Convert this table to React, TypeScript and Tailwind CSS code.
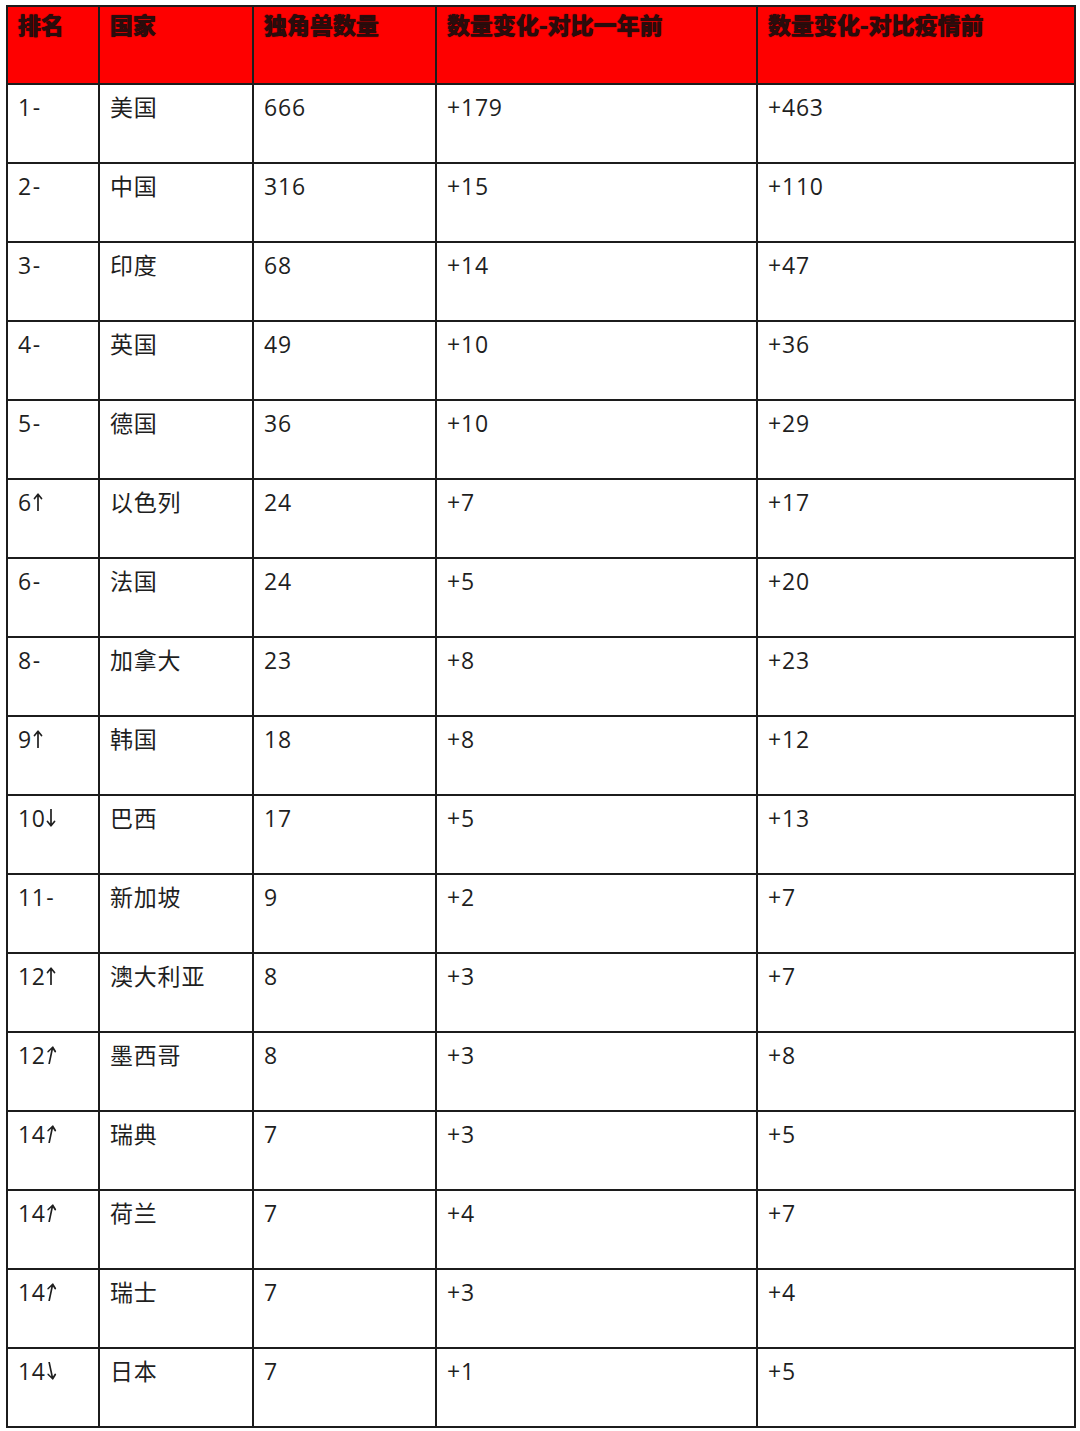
const headers = ["排名", "国家", "独角兽数量", "数量变化-对比一年前", "数量变化-对比疫情前"];

type Row = { rank: string; mark: "-" | "up" | "down"; slant?: boolean; country: string; count: string; year: string; covid: string };

const rows: Row[] = [
  { rank: "1", mark: "-", country: "美国", count: "666", year: "+179", covid: "+463" },
  { rank: "2", mark: "-", country: "中国", count: "316", year: "+15", covid: "+110" },
  { rank: "3", mark: "-", country: "印度", count: "68", year: "+14", covid: "+47" },
  { rank: "4", mark: "-", country: "英国", count: "49", year: "+10", covid: "+36" },
  { rank: "5", mark: "-", country: "德国", count: "36", year: "+10", covid: "+29" },
  { rank: "6", mark: "up", country: "以色列", count: "24", year: "+7", covid: "+17" },
  { rank: "6", mark: "-", country: "法国", count: "24", year: "+5", covid: "+20" },
  { rank: "8", mark: "-", country: "加拿大", count: "23", year: "+8", covid: "+23" },
  { rank: "9", mark: "up", country: "韩国", count: "18", year: "+8", covid: "+12" },
  { rank: "10", mark: "down", country: "巴西", count: "17", year: "+5", covid: "+13" },
  { rank: "11", mark: "-", country: "新加坡", count: "9", year: "+2", covid: "+7" },
  { rank: "12", mark: "up", country: "澳大利亚", count: "8", year: "+3", covid: "+7" },
  { rank: "12", mark: "up", slant: true, country: "墨西哥", count: "8", year: "+3", covid: "+8" },
  { rank: "14", mark: "up", slant: true, country: "瑞典", count: "7", year: "+3", covid: "+5" },
  { rank: "14", mark: "up", slant: true, country: "荷兰", count: "7", year: "+4", covid: "+7" },
  { rank: "14", mark: "up", slant: true, country: "瑞士", count: "7", year: "+3", covid: "+4" },
  { rank: "14", mark: "down", slant: true, country: "日本", count: "7", year: "+1", covid: "+5" },
];

const widths = ["w-[92px]", "w-[154px]", "w-[183px]", "w-[321px]", "w-[318px]"];

function Arrow({ down, slant }: { down?: boolean; slant?: boolean }) {
  return (
    <svg
      width="10"
      height="18"
      viewBox="0 0 10 18"
      className={`inline-block align-baseline ml-[1px] ${down ? "rotate-180" : ""} ${slant ? (down ? "skew-x-[12deg]" : "skew-x-[-12deg]") : ""}`}
      fill="none"
      stroke="#1f1f1f"
      strokeWidth="1.7"
      strokeLinecap="round"
      strokeLinejoin="round"
    >
      <path d="M5 17.5V1.5M1.5 5.5L5 1.2L8.5 5.5" />
    </svg>
  );
}

export default function App() {
  return (
    <div className="w-[1080px] h-[1431px] overflow-hidden bg-white pt-[5px] pl-[6px] font-['Open_Sans','Noto_Sans_CJK_SC',sans-serif]">
      <div className="w-[1070px] border-l-2 border-t-2 border-[#1c1c1c]">
        {/* header */}
        <div className="flex h-[78px] bg-[#fe0000]">
          {headers.map((h, i) => (
            <div
              key={h}
              className={`${widths[i]} shrink-0 border-r-2 border-b-2 border-[#1c1c1c] pl-[10px] pt-0 text-[23px] leading-[34px] font-black text-[#2a0c0c] [text-shadow:0_0_1px_#000] font-['Noto_Sans_CJK_SC',sans-serif]`}
            >
              {h}
            </div>
          ))}
        </div>

        {rows.map((r, idx) => {
          const cells = [r.country, r.count, r.year, r.covid];
          return (
            <div key={idx} className="flex h-[79px]">
              <div className={`${widths[0]} shrink-0 border-r-2 border-b-2 border-[#1c1c1c] pl-[10px] pt-[5px] text-[23px] leading-[34px] tracking-[0.5px] text-[#1f1f1f]`}>
                {r.rank}
                {r.mark === "-" ? (
                  <span className="ml-[1px]">-</span>
                ) : (
                  <Arrow down={r.mark === "down"} slant={r.slant} />
                )}
              </div>
              {cells.map((c, i) => (
                <div
                  key={i}
                  className={`${widths[i + 1]} shrink-0 border-r-2 border-b-2 border-[#1c1c1c] pl-[10px] pt-[5px] text-[23px] leading-[34px] tracking-[0.8px] text-[#1f1f1f]`}
                >
                  {c}
                </div>
              ))}
            </div>
          );
        })}
      </div>
    </div>
  );
}
